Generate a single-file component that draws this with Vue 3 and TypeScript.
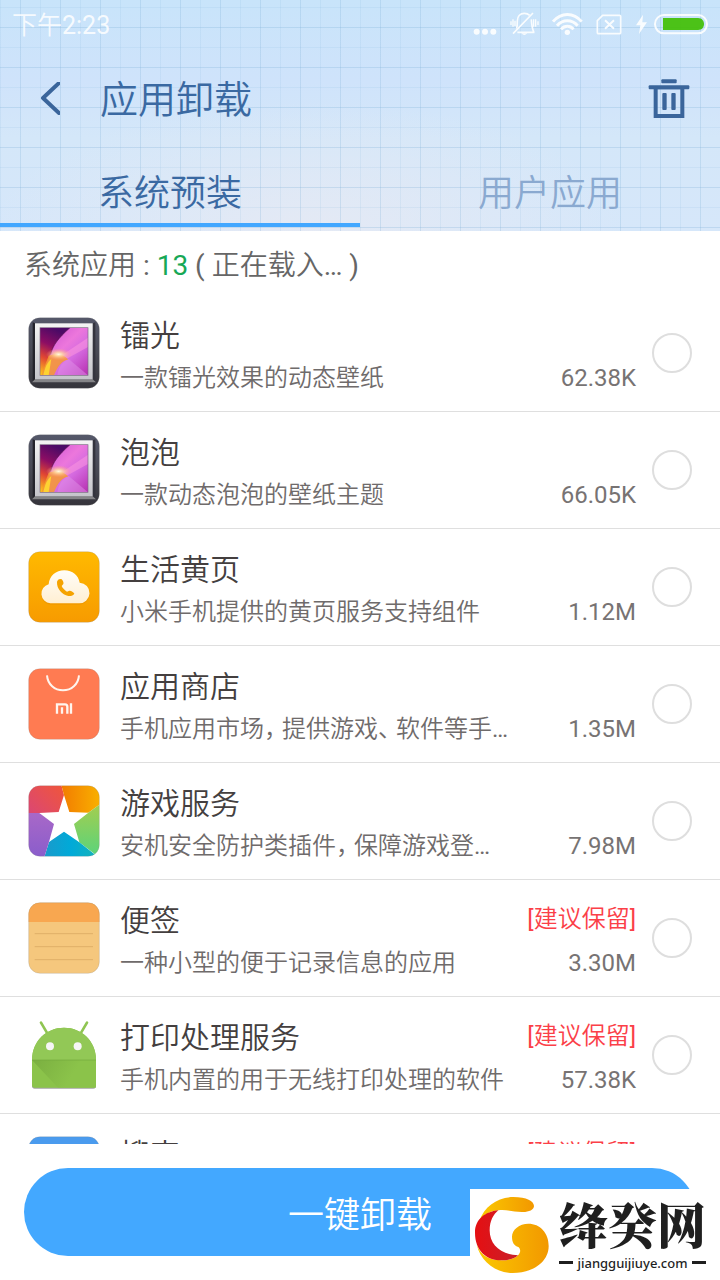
<script setup lang="ts">
import { ref } from 'vue'

type IconKind = 'frame' | 'cloud' | 'store' | 'game' | 'notes' | 'android' | 'search'

interface AppItem {
  id: string
  icon: IconKind
  name: string
  desc: string
  size: string
  keep: boolean
}

const apps: AppItem[] = [
  { id: 'leiguang', icon: 'frame', name: '镭光', desc: '一款镭光效果的动态壁纸', size: '62.38K', keep: false },
  { id: 'bubble', icon: 'frame', name: '泡泡', desc: '一款动态泡泡的壁纸主题', size: '66.05K', keep: false },
  { id: 'yellowpage', icon: 'cloud', name: '生活黄页', desc: '小米手机提供的黄页服务支持组件', size: '1.12M', keep: false },
  { id: 'store', icon: 'store', name: '应用商店', desc: '手机应用市场，提供游戏、软件等手…', size: '1.35M', keep: false },
  { id: 'game', icon: 'game', name: '游戏服务', desc: '安机安全防护类插件，保障游戏登…', size: '7.98M', keep: false },
  { id: 'notes', icon: 'notes', name: '便签', desc: '一种小型的便于记录信息的应用', size: '3.30M', keep: true },
  { id: 'print', icon: 'android', name: '打印处理服务', desc: '手机内置的用于无线打印处理的软件', size: '57.38K', keep: true },
  { id: 'search', icon: 'search', name: '搜索', desc: '', size: '', keep: true },
]

const tabs = ['系统预装', '用户应用']
const activeTab = ref(0)
const selected = ref<string[]>([])

const pieces = (text: string): string[] => text.split(/([，、])/)
const isMark = (text: string): boolean => text === '，' || text === '、'
</script>

<template>
  <div class="page">
    <header class="header">
      <div class="status">
        <span class="time">下午2:23</span>
        <div class="indicators">
          <svg width="24" height="27" viewBox="42 30 72 81" fill="#fff">
            <circle cx="53" cy="95" r="9" /><circle cx="78" cy="95" r="9" /><circle cx="103" cy="95" r="9" />
          </svg>
          <svg width="29" height="27" viewBox="150 30 87 81" fill="none" stroke="#fff" stroke-width="5">
            <path d="M170 86C172 78 172 70 172 63C172 48 181 40 193 40C200 40 205 42 209 46" />
            <path d="M214 58C215 76 216 84 221 95V97H172M159 101L219 39" />
            <path d="M184 100Q193 110 202 100Z" fill="#fff" stroke="none" />
            <path d="M153 64V75M159 58V80M165 62V78M221 58V80M227 58V80M234 64V75" stroke-width="4" />
          </svg>
          <svg width="31" height="27" viewBox="276 30 93 81" fill="none" stroke="#fff" stroke-width="9">
            <path d="M279 65C303 36 341 36 365 65M291 77C308 57 336 57 353 77M303 88C314 76 330 76 341 88" />
            <circle cx="322" cy="97" r="8" fill="#fff" stroke="none" />
          </svg>
          <svg width="26" height="27" viewBox="408 30 78 81" fill="none" stroke="#fff" stroke-width="5">
            <path d="M428 46H479Q482 46 482 49V98Q482 101 479 101H415Q412 101 412 98V62Z" />
            <path d="M435 61L462 86M462 61L435 86" stroke-width="6" />
          </svg>
          <div class="power">
            <svg width="13" height="27" viewBox="525 30 39 81" fill="#fff">
              <path d="M549 44L528 76H541L537 102L561 67H547Z" />
            </svg>
            <svg width="54" height="27" viewBox="582 30 162 81">
              <rect x="585" y="45" width="156" height="55" rx="27" fill="none" stroke="#fff" stroke-width="6" />
              <path d="M609 54H714C738 54 738 90 714 90H609Z" fill="#3fbf00" />
            </svg>
          </div>
        </div>
      </div>

      <div class="titlebar">
        <button class="icon-btn" type="button" aria-label="返回">
          <svg width="20" height="34" viewBox="0 0 20 34" fill="none" stroke="#3a659b" stroke-width="4">
            <path d="M19 1L3 16L19 31" stroke-linejoin="round" stroke-linecap="round" />
          </svg>
        </button>
        <h1>应用卸载</h1>
        <button class="icon-btn" type="button" aria-label="回收站">
          <svg width="42" height="40" viewBox="0 0 126 120" fill="#3a659b">
            <rect x="40" y="1" width="46" height="12" rx="3" />
            <rect x="2" y="19" width="122" height="12" rx="3" />
            <path d="M17 25H109V117H17ZM29 31V105H97V31Z" fill-rule="evenodd" />
            <rect x="43" y="42" width="13" height="51" rx="3" /><rect x="70" y="42" width="13" height="51" rx="3" />
          </svg>
        </button>
      </div>

      <div class="tabs" role="tablist">
        <button
          v-for="(tab, i) in tabs"
          :key="tab"
          type="button"
          role="tab"
          class="tab"
          :class="{ active: activeTab === i }"
          :aria-selected="activeTab === i"
          @click="activeTab = i"
        >{{ tab }}</button>
      </div>
    </header>

    <main class="content">
      <p class="summary">系统应用 : <span class="count">13</span> ( 正在载入… )</p>
      <ul class="apps">
        <li v-for="app in apps" :key="app.id" class="row">
          <svg class="app-icon" viewBox="0 0 216 216">
            <defs>
              <clipPath :id="`clip-${app.id}`"><rect x="2" y="2" width="212" height="212" rx="34" /></clipPath>
            </defs>

            <g v-if="app.icon === 'frame'">
              <defs>
                <linearGradient :id="`case-${app.id}`" x2="0" y2="1"><stop stop-color="#55586a" /><stop offset=".5" stop-color="#484954" /><stop offset="1" stop-color="#35343b" /></linearGradient>
                <linearGradient :id="`silver-${app.id}`" x2="0" y2="1"><stop stop-color="#f4f4f4" /><stop offset="1" stop-color="#c5c5cb" /></linearGradient>
                <linearGradient :id="`art-${app.id}`" x2="1" y2="1"><stop stop-color="#c54ad0" /><stop offset=".45" stop-color="#ec77dc" /><stop offset=".65" stop-color="#d56be0" /><stop offset="1" stop-color="#b62fb0" /></linearGradient>
                <linearGradient :id="`flame-${app.id}`" x1=".4" y1="0" x2=".1" y2="1"><stop stop-color="#4b0a66" /><stop offset=".35" stop-color="#8c0d64" /><stop offset=".65" stop-color="#e24732" /><stop offset="1" stop-color="#ffc51c" /></linearGradient>
                <radialGradient :id="`glow-${app.id}`"><stop stop-color="#fffbe0" /><stop offset=".35" stop-color="#ffd9a0" stop-opacity=".8" /><stop offset="1" stop-color="#ff9a80" stop-opacity="0" /></radialGradient>
                <clipPath :id="`pic-${app.id}`"><rect x="36" y="32" width="144" height="143" /></clipPath>
              </defs>
              <rect x="2" y="2" width="212" height="212" rx="34" :fill="`url(#case-${app.id})`" />
              <path d="M14 16L21 19V187L14 194Z" fill="#24242c" />
              <path d="M202 16L194 19V187L202 194Z" fill="#34343e" />
              <path d="M21 187H194L204 196H12Z" fill="#858588" />
              <rect x="21" y="19" width="173" height="168" :fill="`url(#silver-${app.id})`" />
              <g :clip-path="`url(#pic-${app.id})`">
                <rect x="36" y="32" width="144" height="143" :fill="`url(#art-${app.id})`" />
                <path d="M90 122L180 62V90L108 130Z" fill="#ff9ae0" opacity=".5" />
                <path d="M36 32H126C92 62 76 82 68 110C62 130 50 155 44 175H36Z" :fill="`url(#flame-${app.id})`" />
                <path d="M126 32C90 64 74 86 68 112" fill="none" stroke="#55104e" stroke-width="2" />
                <path d="M62 116C84 108 104 110 122 128C104 128 88 148 78 175H40Z" fill="#f49a30" opacity=".85" />
                <path d="M88 175C92 150 102 134 122 126L180 175Z" fill="#df8fe8" opacity=".5" />
                <ellipse cx="92" cy="112" rx="38" ry="18" :fill="`url(#glow-${app.id})`" />
                <path d="M46 175C50 154 56 138 70 126L62 175Z" fill="#ffe22c" opacity=".8" />
              </g>
              <rect x="36" y="32" width="144" height="143" fill="none" stroke="#7c6b83" stroke-width="2" />
            </g>

            <g v-else-if="app.icon === 'cloud'">
              <defs>
                <linearGradient id="cloud-bg" x2="0" y2="1"><stop stop-color="#ffb900" /><stop offset="1" stop-color="#f79b00" /></linearGradient>
                <linearGradient id="cloud-fg" x2="0" y2="1"><stop stop-color="#fffdf8" /><stop offset="1" stop-color="#ffefd2" /></linearGradient>
              </defs>
              <rect x="2" y="2" width="212" height="212" rx="34" fill="url(#cloud-bg)" />
              <path d="M67 161A29 29 0 0 1 62 104C64 78 84 62 109 62C134 62 151 77 155 99A31 31 0 0 1 152 161Z" fill="#e58f00" opacity=".45" />
              <path d="M67 157A29 29 0 0 1 62 100C64 74 84 58 109 58C134 58 151 73 155 95A31 31 0 0 1 152 157Z" fill="url(#cloud-fg)" />
              <path d="M93 85L99 84C104 85 108 96 106 99L101 105C104 112 110 117 117 122L124 119C129 119 138 124 139 128C136 134 128 136 121 135C102 132 86 113 87 94C87 90 90 87 93 85Z" fill="#f5a300" />
            </g>

            <g v-else-if="app.icon === 'store'">
              <rect x="2" y="2" width="212" height="212" rx="34" fill="#ff7b52" />
              <path d="M57 22C59 49 80 67 105 67C130 67 151 49 153 22" fill="none" stroke="#fff5ee" stroke-width="6" />
              <path d="M87 137V109H111Q118 109 118 116V137M102 118V137M129 106V137" fill="none" stroke="#fff5ee" stroke-width="7" />
            </g>

            <g v-else-if="app.icon === 'game'" :clip-path="`url(#clip-${app.id})`">
              <defs>
                <linearGradient id="g-red" x1="0" y1="1" x2="1" y2="0"><stop stop-color="#d8457b" /><stop offset="1" stop-color="#f0563a" /></linearGradient>
                <linearGradient id="g-orange" x2="1" y2="0"><stop stop-color="#f27c00" /><stop offset="1" stop-color="#f9b000" /></linearGradient>
                <linearGradient id="g-green" x2="0" y2="1"><stop stop-color="#a4cd4f" /><stop offset="1" stop-color="#58d47c" /></linearGradient>
                <linearGradient id="g-blue" x2="1" y2="0"><stop stop-color="#1a9acb" /><stop offset=".5" stop-color="#00aad8" /><stop offset="1" stop-color="#16b3b8" /></linearGradient>
                <linearGradient id="g-purple" x2="0" y2="1"><stop stop-color="#a868c8" /><stop offset="1" stop-color="#8a5dcb" /></linearGradient>
              </defs>
              <path d="M0 84H34L108 108V30L100 0H0Z" fill="url(#g-red)" />
              <path d="M100 0L108 30V108L181 83L216 58V0Z" fill="url(#g-orange)" />
              <path d="M216 58L181 83L108 108L154 172L204 210L216 216Z" fill="url(#g-green)" />
              <path d="M49 216L63 171L108 108L154 172L210 216Z" fill="url(#g-blue)" />
              <path d="M0 84H34L108 108L63 171L49 216H0Z" fill="url(#g-purple)" />
              <path d="M108 30L124 81L181 83L138 117L154 172L108 140L63 171L78 117L34 84L92 81Z" fill="#fff" />
            </g>

            <g v-else-if="app.icon === 'notes'" :clip-path="`url(#clip-${app.id})`">
              <rect width="216" height="216" fill="#f5c77d" />
              <rect width="216" height="60" fill="#f8a750" />
              <path d="M20 95H195M20 134H195M20 173H195" stroke="#dfb068" stroke-width="3" />
            </g>

            <g v-else-if="app.icon === 'android'">
              <defs>
                <linearGradient id="droid-shade" gradientUnits="userSpaceOnUse" x1="12" y1="123" x2="120" y2="190"><stop stop-color="#73a63c" /><stop offset="1" stop-color="#8bc34a" /></linearGradient>
              </defs>
              <path d="M39 11L58 43M177 11L158 43" stroke="#8fc552" stroke-width="8" stroke-linecap="round" />
              <path d="M12 125V201Q12 209 20 209H196Q204 209 204 201V125Z" fill="#a4a4a4" />
              <path d="M12 123C12 66 55 26 108 26S204 66 204 123V198Q204 206 196 206H20Q12 206 12 198Z" fill="#8bc34a" />
              <path d="M12 123C12 66 55 26 108 26S204 66 204 123Z" fill="#92c856" />
              <path d="M12 123L90 206H204V123Z" fill="url(#droid-shade)" opacity=".7" />
              <path d="M12 123H204" stroke="#74a93c" stroke-width="2" />
              <circle cx="66" cy="82" r="12" fill="#f5f5f5" /><circle cx="149" cy="82" r="12" fill="#f5f5f5" />
            </g>

            <rect v-else x="2" y="2" width="212" height="212" rx="34" fill="#4a9bee" />
            <rect v-if="app.icon !== 'android'" x="2" y="2" width="212" height="212" rx="34" fill="none" stroke="#777" stroke-opacity=".3" stroke-width="2" />
          </svg>

          <div class="info">
            <div class="line">
              <label class="name" :for="app.id">{{ app.name }}</label>
              <span v-if="app.keep" class="keep">[建议保留]</span>
            </div>
            <div class="line detail">
              <span class="desc"><template v-for="(piece, i) in pieces(app.desc)" :key="i"><span v-if="isMark(piece)" class="mark">{{ piece }}</span><template v-else>{{ piece }}</template></template></span>
              <span class="size">{{ app.size }}</span>
            </div>
          </div>
          <input :id="app.id" v-model="selected" class="check" type="checkbox" :value="app.id" />
        </li>
      </ul>
    </main>

    <footer class="footer">
      <button class="primary" type="button">一键卸载</button>
    </footer>

    <div class="brand">
      <svg width="74" height="76" viewBox="45 138 222 228">
        <defs>
          <linearGradient id="gold" x2="1" y2="0"><stop stop-color="#fbc900" /><stop offset="1" stop-color="#f29800" /></linearGradient>
          <linearGradient id="crimson" x2="1" y2="0"><stop stop-color="#e50f12" /><stop offset="1" stop-color="#c9202a" /></linearGradient>
        </defs>
        <path d="M58 210C72 165 115 138 160 138C200 138 222 150 222 165C222 177 205 184 185 183C160 183 140 175 115 178C90 180 70 192 58 210Z" fill="url(#gold)" />
        <path d="M50 280C62 315 90 328 125 328C150 328 165 322 174 313C182 305 183 295 175 288C163 284 156 275 156 257C156 236 178 218 205 218C240 218 266 245 266 285C266 332 220 366 158 366C110 366 62 335 50 280Z" fill="url(#gold)" />
        <path d="M115 178C75 182 45 205 45 245C45 300 80 328 125 328C150 328 165 322 174 313C120 310 89 280 89 238C89 210 100 190 115 178Z" fill="url(#crimson)" />
      </svg>
      <div class="brand-text">
        <strong>绛癸网</strong>
        <span class="domain">jiangguijiuye.com</span>
      </div>
    </div>
  </div>
</template>

<style>
body {
  margin: 0;
}
</style>

<style scoped>
* {
  box-sizing: border-box;
}
.page {
  position: relative;
  display: flex;
  flex-direction: column;
  height: 100vh;
  overflow: hidden;
  background: #fff;
  font-family: Roboto, "Noto Sans CJK SC DemiLight", "Noto Sans CJK SC", sans-serif;
  font-weight: 400;
  color: #6f6b6b;
}
button {
  padding: 0;
  border: 0;
  background: none;
  font: inherit;
  cursor: pointer;
}
svg {
  display: block;
  flex: none;
}
.header {
  flex: none;
  background:
    repeating-linear-gradient(90deg, transparent 0 20px, rgba(120, 170, 210, 0.13) 20px 21px, transparent 21px 40px),
    repeating-linear-gradient(180deg, transparent 0 27px, rgba(120, 170, 210, 0.16) 27px 28px, transparent 28px 40px),
    repeating-linear-gradient(90deg, rgba(120, 175, 215, 0.12) 0 1px, transparent 1px 20px),
    repeating-linear-gradient(180deg, transparent 0 7px, rgba(120, 175, 215, 0.12) 7px 8px, transparent 8px 20px),
    radial-gradient(ellipse 320px 130px at 43% 100%, rgba(232, 234, 243, 0.8), transparent),
    linear-gradient(180deg, #c8e4fa 0%, #cfe3fb 35%, #d4e7f9 60%, #d6e7fa 100%);
}
.status {
  display: flex;
  justify-content: space-between;
  height: 48px;
  padding: 10px 12px 0;
}
.time {
  font-size: 25px;
  line-height: 32px;
  color: rgba(255, 255, 255, 0.85);
}
.indicators {
  display: flex;
  gap: 13px;
  opacity: 0.9;
}
.power {
  display: flex;
  gap: 6px;
}
.titlebar {
  display: flex;
  align-items: center;
  height: 102px;
  padding: 0 30px 0 40px;
}
.icon-btn {
  flex: none;
}
h1 {
  flex: 1;
  margin: 0 0 0 40px;
  padding-top: 2px;
  font-size: 38px;
  font-weight: 350;
  line-height: 56px;
  color: #3a69a2;
}
.tabs {
  display: flex;
  padding-bottom: 4px;
}
.tab {
  flex: 1;
  height: 77px;
  padding: 14px 20px 0 0;
  border-bottom: 4px solid transparent;
  font-size: 36px;
  font-weight: 350;
  line-height: 52px;
  color: #8aa9d0;
}
.tab:last-child {
  padding: 14px 0 0 20px;
}
.tab.active {
  border-color: #42a7ff;
  color: #3a69a2;
}
.content {
  flex: 1;
  min-height: 0;
  overflow-y: auto;
  scrollbar-width: none;
}
.summary {
  margin: 0;
  padding: 15px 24px 9px;
  font-size: 28px;
  line-height: 40px;
  color: #666;
}
.count {
  color: #17a856;
}
.apps {
  margin: 0;
  padding: 0;
  list-style: none;
}
.row {
  display: flex;
  align-items: center;
  height: 117px;
  padding: 0 28px;
  border-bottom: 1px solid #dfdfdf;
}
.app-icon {
  width: 72px;
  height: 72px;
}
.info {
  flex: 1;
  min-width: 0;
  margin: 0 16px 0 20px;
  padding-top: 7px;
}
.line {
  display: flex;
  align-items: flex-start;
  justify-content: space-between;
  height: 44px;
  white-space: nowrap;
}
.detail {
  height: 42px;
}
.name {
  font-size: 30px;
  font-weight: 350;
  line-height: 44px;
  color: #443f3f;
}
.keep,
.desc,
.size {
  padding-top: 2px;
  font-size: 24px;
  line-height: 36px;
}
.keep {
  color: #fb4048;
}
.mark {
  margin-right: 6px;
  font-feature-settings: "halt";
}
.size {
  color: #777373;
}
.check {
  flex: none;
  width: 40px;
  height: 40px;
  margin: 0;
  border: 2px solid #dedede;
  border-radius: 50%;
  background: #fff;
  appearance: none;
}
.check:checked {
  border-color: #42a7ff;
  background: #42a7ff;
}
.footer {
  flex: none;
  padding: 24px;
}
.primary {
  display: block;
  width: 100%;
  height: 88px;
  border-radius: 44px;
  background: #43a8ff;
  font-size: 36px;
  font-weight: 350;
  color: #fff;
}
.brand {
  position: absolute;
  right: 0;
  bottom: 0;
  display: flex;
  align-items: center;
  gap: 10px;
  height: 91px;
  padding: 0 14px 0 5px;
  background: #fff;
}
.brand-text {
  display: flex;
  flex-direction: column;
  padding-bottom: 6px;
  color: #1f1f1f;
}
.brand-text strong {
  font-family: "Noto Serif CJK SC", "Noto Sans CJK SC", serif;
  font-size: 49px;
  font-weight: 900;
  line-height: 62px;
}
.domain {
  display: flex;
  align-items: center;
  justify-content: space-between;
  font-family: "Noto Sans", sans-serif;
  font-size: 13px;
  font-weight: 500;
  line-height: 18px;
}
.domain::before,
.domain::after {
  content: "";
  width: 14px;
  height: 3px;
  background: #1f1f1f;
}
</style>
